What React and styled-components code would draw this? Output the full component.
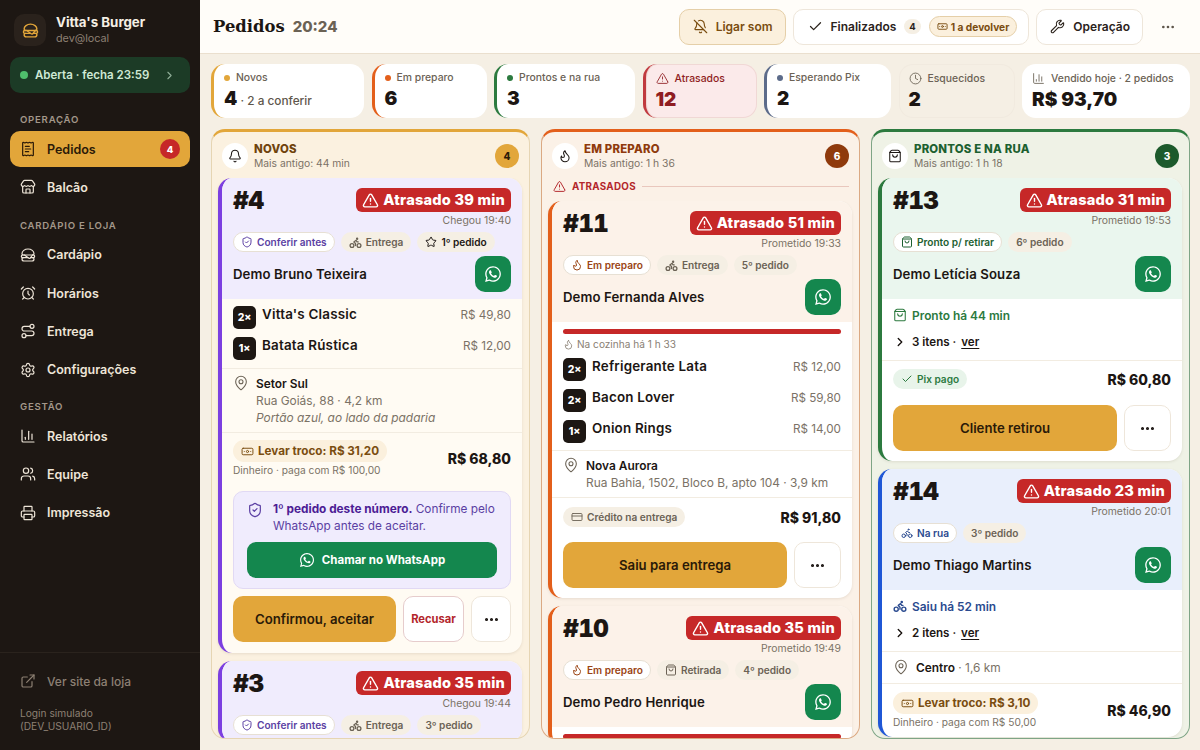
import React from "react";
import styled, { createGlobalStyle } from "styled-components";
import {
  Hamburger,
  ReceiptText,
  Store,
  AlarmClock,
  Route,
  Settings,
  ChartColumn,
  Users,
  Printer,
  ExternalLink,
  ChevronRight,
  BellOff,
  Bell,
  Check,
  Wrench,
  Ellipsis,
  Banknote,
  TriangleAlert,
  Clock,
  Flame,
  ShoppingBag,
  ShieldCheck,
  Bike,
  Star,
  MapPin,
  CreditCard,
} from "lucide-react";
import { FaWhatsapp } from "react-icons/fa";

const GlobalStyle = createGlobalStyle`
  html, body { margin: 0; padding: 0; height: 100%; }
  body { font-family: Inter, "Noto Sans", sans-serif; background: #f5efe4; color: #1c1613; }
  * { box-sizing: border-box; }
`;

const Page = styled.div`
  display: flex;
  height: 750px;
  overflow: hidden;
`;

const Sidebar = styled.aside`
  width: 200px;
  flex-shrink: 0;
  background: #1d1713;
  color: #f5efe4;
  display: flex;
  flex-direction: column;
`;

const Brand = styled.div`
  display: flex;
  align-items: center;
  gap: 10px;
  padding: 14px 14px 0;
`;

const Logo = styled.div`
  width: 32px;
  height: 32px;
  border-radius: 10px;
  background: #2a221c;
  color: #e2a63a;
  display: flex;
  align-items: center;
  justify-content: center;
`;

const BrandName = styled.div`
  font-size: 13.3px;
  font-weight: 700;
  line-height: 17px;
`;

const BrandSub = styled.div`
  font-size: 10.8px;
  color: #8d8073;
  line-height: 15px;
`;

const StatusPill = styled.div`
  margin: 11px 10px 0;
  height: 36px;
  border-radius: 10px;
  background: #1c3b26;
  color: #cfe9d5;
  display: flex;
  align-items: center;
  padding: 0 14px 0 10px;
  font-size: 11.5px;
  font-weight: 600;
  gap: 7px;
  svg { margin-left: auto; color: #8fae97; }
`;

const StatusDot = styled.span`
  width: 8px;
  height: 8px;
  border-radius: 50%;
  background: #4fbf6c;
`;

const NavLabel = styled.div`
  font-size: 9.6px;
  font-weight: 600;
  letter-spacing: 0.75px;
  color: #a3978a;
  padding: 0 20px;
  margin: ${(p) => p.$top || "20px"} 0 5px;
  line-height: 12px;
`;

const NavItem = styled.div`
  margin: 0 10px 2.35px;
  height: 36px;
  border-radius: 10px;
  display: flex;
  align-items: center;
  gap: 11px;
  padding: 0 10px 0 10px;
  font-size: 12.5px;
  font-weight: 600;
  background: ${(p) => (p.$active ? "#e2a63a" : "transparent")};
  color: ${(p) => (p.$active ? "#2b1a08" : "#eee5d8")};
`;

const NavBadge = styled.span`
  margin-left: auto;
  width: 20px;
  height: 20px;
  border-radius: 50%;
  background: #c62828;
  color: #fff;
  font-size: 9.5px;
  font-weight: 800;
  display: flex;
  align-items: center;
  justify-content: center;
`;

const SideFooter = styled.div`
  margin-top: auto;
  border-top: 1px solid #2a231d;
  padding: 18px 20px 17px;
  color: #8d8073;
`;

const SiteLink = styled.div`
  display: flex;
  align-items: center;
  gap: 11px;
  font-size: 12px;
  font-weight: 500;
  height: 20px;
`;

const LoginNote = styled.div`
  margin-top: 16px;
  font-size: 10.2px;
  line-height: 13px;
`;

const Main = styled.main`
  flex: 1;
  min-width: 0;
  display: flex;
  flex-direction: column;
`;

const TopBar = styled.header`
  height: 54px;
  flex-shrink: 0;
  display: flex;
  align-items: center;
  padding: 0 12px 0 13px;
  background: #fffdf9;
  border-bottom: 1px solid #eadfce;
  gap: 7px;
`;

const PageTitle = styled.h1`
  font-family: "DejaVu Serif", serif;
  font-size: 16.4px;
  font-weight: 800;
  margin: 0;
  color: #1c1613;
`;

const ClockText = styled.span`
  font-size: 15px;
  font-weight: 800;
  color: #6b6255;
  margin-left: 1px;
  margin-right: auto;
`;

const TopButton = styled.button`
  height: 36px;
  border-radius: 10px;
  border: 1px solid ${(p) => (p.$on ? "#e5cfa8" : "#eee6da")};
  background: ${(p) => (p.$on ? "#fbf0dd" : "#fff")};
  color: ${(p) => (p.$on ? "#7a4d10" : "#2b231c")};
  padding: ${(p) => p.$pad || "0 12px 0 13px"};
  display: flex;
  align-items: center;
  gap: 8px;
  font-family: inherit;
  font-size: 12px;
  font-weight: 600;
  white-space: nowrap;
`;

const CountChip = styled.span`
  background: #f5efe4;
  border-radius: 9px;
  font-size: 9.5px;
  font-weight: 700;
  padding: 2px 5px;
`;

const ReturnChip = styled.span`
  display: flex;
  align-items: center;
  gap: 3px;
  background: #fbf0dd;
  border: 1px solid #e5cfa8;
  color: #7a4d10;
  border-radius: 11px;
  height: 21px;
  padding: 0 7px;
  font-size: 10.2px;
  font-weight: 700;
`;

const DotsPlain = styled.span`
  margin-left: 10px;
  margin-right: 12px;
  color: #5e564b;
  display: flex;
`;

const StatRow = styled.section`
  display: grid;
  grid-template-columns: 153fr 115fr 141fr 114fr 127fr 116fr 168fr;
  gap: 7.5px;
  padding: 10px 10px 0 11px;
  height: 64px;
  flex-shrink: 0;
`;

const Stat = styled.div`
  border-radius: 14px;
  padding: 8px 8px 0 10px;
  background: ${(p) => p.$bg || "#fff"};
  border-left: ${(p) => (p.$color ? `3px solid ${p.$color}` : "none")};
  box-shadow: ${(p) => (p.$ring ? `inset 0 0 0 1px ${p.$ring}` : "none")};
  overflow: hidden;
`;

const StatLabel = styled.div`
  display: flex;
  align-items: center;
  gap: 6px;
  font-size: 10.4px;
  font-weight: 500;
  line-height: 12px;
  color: ${(p) => p.$color || "#6b6255"};
  white-space: nowrap;
`;

const StatDot = styled.span`
  width: 6px;
  height: 6px;
  border-radius: 50%;
  background: ${(p) => p.$color};
`;

const StatValue = styled.div`
  margin-top: 3px;
  font-size: 19px;
  font-weight: 900;
  line-height: 24px;
  color: ${(p) => p.$color || "#1c1613"};
  white-space: nowrap;
`;

const StatNote = styled.span`
  font-size: 11.8px;
  font-weight: 500;
  color: #5e564b;
`;

const Board = styled.section`
  flex: 1;
  min-height: 0;
  display: grid;
  grid-template-columns: repeat(3, 1fr);
  gap: 11px;
  padding: 11px 10px 11px 11px;
`;

const Column = styled.div`
  min-height: 0;
  overflow: hidden;
  display: flex;
  flex-direction: column;
  border-radius: 14px;
  border: 1px solid ${(p) => p.$line};
  border-top: 3px solid ${(p) => p.$accent};
  background: ${(p) => p.$bg};
`;

const ColumnHead = styled.div`
  display: flex;
  align-items: center;
  gap: 6px;
  padding: 2px 10px 0 10px;
  height: 46px;
  flex-shrink: 0;
`;

const ColumnIcon = styled.span`
  width: 26px;
  height: 26px;
  border-radius: 50%;
  background: #fff;
  display: flex;
  align-items: center;
  justify-content: center;
  flex-shrink: 0;
`;

const ColumnTitle = styled.div`
  font-size: 11.4px;
  font-weight: 800;
  letter-spacing: 0.2px;
  line-height: 14px;
  color: ${(p) => p.$color};
`;

const ColumnSub = styled.div`
  font-size: 10.3px;
  color: #7b7266;
  line-height: 15px;
`;

const ColumnCount = styled.span`
  margin-left: auto;
  width: 24px;
  height: 24px;
  border-radius: 50%;
  background: ${(p) => p.$bg};
  color: ${(p) => p.$color};
  font-size: 10px;
  font-weight: 800;
  display: flex;
  align-items: center;
  justify-content: center;
`;

const LateDivider = styled.div`
  display: flex;
  align-items: center;
  gap: 6px;
  padding: 0 10px 0 11px;
  height: 16px;
  font-size: 9.8px;
  font-weight: 700;
  letter-spacing: 0.3px;
  color: #b3262b;
  flex-shrink: 0;
  margin-bottom: 7px;
  &::after {
    content: "";
    flex: 1;
    height: 1px;
    background: #e9c7bd;
  }
`;

const CardList = styled.div`
  flex: 1;
  min-height: 0;
  overflow: hidden;
  display: flex;
  flex-direction: column;
  gap: 8px;
  padding: 0 7px 0 6px;
`;

const Card = styled.article`
  flex-shrink: 0;
  border-radius: 14px;
  border-left: 4px solid ${(p) => p.$accent};
  background: ${(p) => p.$bg || "#fff"};
  overflow: hidden;
  box-shadow: 0 1px 3px rgba(60, 40, 10, 0.1);
`;

const CardHead = styled.div`
  background: ${(p) => p.$tint};
  padding: 10px 11px 7px;
`;

const CardTop = styled.div`
  display: flex;
  justify-content: space-between;
  align-items: flex-start;
`;

const OrderNumber = styled.div`
  font-size: 24px;
  font-weight: 900;
  line-height: 25px;
  letter-spacing: -0.5px;
  font-variant-numeric: tabular-nums;
  font-feature-settings: "tnum";
`;

const TimeBox = styled.div`
  display: flex;
  flex-direction: column;
  align-items: flex-end;
`;

const LateChip = styled.div`
  display: flex;
  align-items: center;
  gap: 4px;
  height: 24px;
  border-radius: 6px;
  padding: 0 6px 0 6px;
  background: #c62828;
  color: #fff;
  font-size: 14.6px;
  letter-spacing: 0.2px;
  font-weight: 800;
  white-space: nowrap;
`;

const TimeNote = styled.div`
  font-size: 10.4px;
  color: #7b7266;
  line-height: 18px;
`;

const Tags = styled.div`
  display: flex;
  gap: 6px;
  margin-top: 2px;
`;

const Tag = styled.span`
  display: flex;
  align-items: center;
  gap: 4px;
  height: 20px;
  border-radius: 10px;
  padding: 0 7px;
  font-size: 10.1px;
  font-weight: 600;
  white-space: nowrap;
  background: ${(p) => (p.$main ? "#fff" : "#f5efe4")};
  border: 1px solid ${(p) => (p.$main ? "#e7e0d4" : "transparent")};
  color: ${(p) => p.$color || "#6b6255"};
`;

const NameRow = styled.div`
  display: flex;
  align-items: center;
  justify-content: space-between;
  margin-top: 4px;
`;

const CustomerName = styled.div`
  font-size: 13.2px;
  letter-spacing: 0.1px;
  font-weight: 600;
  color: #1c1613;
`;

const WhatsButton = styled.span`
  width: 36px;
  height: 36px;
  border-radius: 10px;
  background: #14874e;
  color: #fff;
  display: flex;
  align-items: center;
  justify-content: center;
`;

const Section = styled.div`
  padding: ${(p) => p.$pad || "7px 11px"};
  border-top: ${(p) => (p.$line ? "1px solid #f2ece1" : "none")};
`;

const LateBar = styled.div`
  height: 5px;
  border-radius: 3px;
  background: #c62828;
`;

const KitchenNote = styled.div`
  display: flex;
  align-items: center;
  gap: 3px;
  margin-top: 3px;
  font-size: 10.1px;
  line-height: 14px;
  color: #8a8175;
`;

const ItemRow = styled.div`
  display: flex;
  gap: 6px;
  height: 24px;
  margin-bottom: 7px;
  &:last-child { margin-bottom: 0; }
`;

const Qty = styled.span`
  width: 23px;
  height: 23px;
  border-radius: 5px;
  background: #1d1713;
  color: #fff;
  font-size: 10.4px;
  font-weight: 800;
  display: flex;
  align-items: center;
  justify-content: center;
  flex-shrink: 0;
`;

const ItemName = styled.span`
  font-size: 13.4px;
  letter-spacing: 0.2px;
  font-weight: 600;
  line-height: 17px;
`;

const ItemPrice = styled.span`
  margin-left: auto;
  font-size: 11.7px;
  line-height: 19px;
  color: #7b7266;
`;

const Place = styled.div`
  display: flex;
  gap: 7px;
  color: #6b6255;
`;

const PlaceLines = styled.div`
  font-size: 11.9px;
  line-height: 17px;
  color: #7b7266;
  min-width: 0;
  white-space: nowrap;
  strong { font-weight: 600; color: #1c1613; }
  em { font-style: italic; }
`;

const StateLine = styled.div`
  display: flex;
  align-items: center;
  gap: 5px;
  height: 14px;
  font-size: 11.9px;
  font-weight: 600;
  color: ${(p) => p.$color};
`;

const ItemsToggle = styled.div`
  display: flex;
  align-items: center;
  gap: 5px;
  margin-top: 13px;
  height: 14px;
  font-size: 11.6px;
  font-weight: 600;
  color: #1c1613;
  u { text-underline-offset: 2px; }
`;

const PayRow = styled.div`
  display: flex;
  align-items: center;
  justify-content: space-between;
`;

const PayChip = styled.span`
  display: inline-flex;
  align-items: center;
  gap: 4px;
  height: ${(p) => (p.$big ? "22px" : "20px")};
  border-radius: 11px;
  padding: 0 8px;
  font-size: ${(p) => (p.$big ? "11.7px" : "10.1px")};
  font-weight: ${(p) => (p.$big ? 700 : 600)};
  white-space: nowrap;
  background: ${(p) => p.$bg};
  color: ${(p) => p.$color};
`;

const PayNote = styled.div`
  font-size: 10.2px;
  line-height: 13px;
  color: #7b7266;
  margin-top: 2px;
`;

const Total = styled.div`
  font-size: 14px;
  font-weight: 800;
  white-space: nowrap;
`;

const Notice = styled.div`
  margin: 0 11px;
  padding: 9px 13px 10px;
  border-radius: 10px;
  background: #f0ecfd;
  border: 1px solid #e1d9f4;
`;

const NoticeText = styled.div`
  display: flex;
  gap: 10px;
  font-size: 11.8px;
  line-height: 17px;
  color: #5b3fa3;
  strong { font-weight: 700; color: #4c1d95; }
  svg { flex-shrink: 0; margin-top: 1px; }
`;

const WideWhats = styled.div`
  margin-top: 7px;
  height: 36px;
  border-radius: 9px;
  background: #14874e;
  color: #fff;
  display: flex;
  align-items: center;
  justify-content: center;
  gap: 7px;
  font-size: 11.5px;
  font-weight: 700;
`;

const Actions = styled.div`
  display: flex;
  gap: 7px;
  padding: ${(p) => p.$pad || "7px 11px 10px"};
`;

const PrimaryAction = styled.button`
  flex: 1;
  height: 46px;
  border: none;
  border-radius: 10px;
  background: #e2a63a;
  color: #2b1a08;
  font-family: inherit;
  font-size: 13.2px;
  font-weight: 600;
`;

const RefuseAction = styled.button`
  width: 61px;
  height: 46px;
  border-radius: 10px;
  border: 1px solid #e6cccc;
  background: #fff;
  color: #b3262b;
  font-family: inherit;
  font-size: 11.2px;
  font-weight: 700;
`;

const MoreAction = styled.button`
  width: ${(p) => (p.$thin ? "40px" : "47px")};
  height: 46px;
  border-radius: 10px;
  border: 1px solid #eee6da;
  background: #fff;
  color: #1c1613;
  display: flex;
  align-items: center;
  justify-content: center;
`;

const NAV = [
  { label: "OPERAÇÃO", top: "21px", items: [
    { icon: ReceiptText, text: "Pedidos", active: true, badge: 4 },
    { icon: Store, text: "Balcão" },
  ] },
  { label: "CARDÁPIO E LOJA", top: "12px", items: [
    { icon: Hamburger, text: "Cardápio" },
    { icon: AlarmClock, text: "Horários" },
    { icon: Route, text: "Entrega" },
    { icon: Settings, text: "Configurações" },
  ] },
  { label: "GESTÃO", top: "11px", items: [
    { icon: ChartColumn, text: "Relatórios" },
    { icon: Users, text: "Equipe" },
    { icon: Printer, text: "Impressão" },
  ] },
];

const STATS = [
  { label: "Novos", dot: "#e2a63a", color: "#e2a63a", value: "4", note: " · 2 a conferir" },
  { label: "Em preparo", dot: "#e35f1b", color: "#e35f1b", value: "6" },
  { label: "Prontos e na rua", dot: "#2c7a3f", color: "#2c7a3f", value: "3" },
  { label: "Atrasados", icon: TriangleAlert, color: "#c03a3f", value: "12", bg: "#fbeaea", ring: "#f0d8d5", text: "#8f1d22" },
  { label: "Esperando Pix", dot: "#5c6b8a", color: "#5c6b8a", value: "2" },
  { label: "Esquecidos", icon: Clock, value: "2", bg: "transparent", ring: "#f1eadf" },
  { label: "Vendido hoje · 2 pedidos", icon: ChartColumn, value: "R$ 93,70" },
];

const WAIT = { text: "Conferir antes", icon: ShieldCheck, color: "#5b3fa3" };
const COOK = { text: "Em preparo", icon: Flame, color: "#9a4413" };

const OrderHead = ({ order }) => (
  <CardHead $tint={order.tint}>
    <CardTop>
      <OrderNumber>{order.number}</OrderNumber>
      <TimeBox>
        <LateChip>
          <TriangleAlert size={17} strokeWidth={2} />
          {order.late}
        </LateChip>
        <TimeNote>{order.time}</TimeNote>
      </TimeBox>
    </CardTop>
    <Tags>
      <Tag $main $color={order.state.color}>
        <order.state.icon size={12} strokeWidth={2} />
        {order.state.text}
      </Tag>
      {order.kind === "Entrega" && (
        <Tag>
          <Bike size={13} strokeWidth={2.4} />
          Entrega
        </Tag>
      )}
      {order.kind === "Retirada" && (
        <Tag>
          <ShoppingBag size={12} strokeWidth={2} />
          Retirada
        </Tag>
      )}
      <Tag $color={order.first ? "#1c1613" : undefined}>
        {order.first && <Star size={12} strokeWidth={2} />}
        {order.nth}
      </Tag>
    </Tags>
    {order.name && (
      <NameRow>
        <CustomerName>{order.name}</CustomerName>
        <WhatsButton>
          <FaWhatsapp size={18} />
        </WhatsButton>
      </NameRow>
    )}
  </CardHead>
);

const Items = ({ items }) =>
  items.map(([qty, name, price]) => (
    <ItemRow key={name}>
      <Qty>{qty}</Qty>
      <ItemName>{name}</ItemName>
      <ItemPrice>{price}</ItemPrice>
    </ItemRow>
  ));

export default function App() {
  return (
    <Page>
      <GlobalStyle />
      <Sidebar>
        <Brand>
          <Logo>
            <Hamburger size={17} strokeWidth={2} />
          </Logo>
          <div>
            <BrandName>Vitta's Burger</BrandName>
            <BrandSub>dev@local</BrandSub>
          </div>
        </Brand>
        <StatusPill>
          <StatusDot />
          Aberta · fecha 23:59
          <ChevronRight size={13} />
        </StatusPill>
        {NAV.map((group) => (
          <React.Fragment key={group.label}>
            <NavLabel $top={group.top}>{group.label}</NavLabel>
            {group.items.map((item) => (
              <NavItem key={item.text} $active={item.active}>
                <item.icon size={16} strokeWidth={1.8} />
                {item.text}
                {item.badge && <NavBadge>{item.badge}</NavBadge>}
              </NavItem>
            ))}
          </React.Fragment>
        ))}
        <SideFooter>
          <SiteLink>
            <ExternalLink size={16} strokeWidth={1.8} />
            Ver site da loja
          </SiteLink>
          <LoginNote>
            Login simulado
            <br />
            (DEV_USUARIO_ID)
          </LoginNote>
        </SideFooter>
      </Sidebar>

      <Main>
        <TopBar>
          <PageTitle>Pedidos</PageTitle>
          <ClockText>20:24</ClockText>
          <TopButton $on>
            <BellOff size={15} strokeWidth={1.8} />
            Ligar som
          </TopButton>
          <TopButton $pad="0 11px 0 14px">
            <Check size={15} strokeWidth={2} />
            Finalizados
            <CountChip>4</CountChip>
            <ReturnChip>
              <Banknote size={11} strokeWidth={2} />1 a devolver
            </ReturnChip>
          </TopButton>
          <TopButton>
            <Wrench size={15} strokeWidth={1.8} />
            Operação
          </TopButton>
          <DotsPlain>
            <Ellipsis size={16} />
          </DotsPlain>
        </TopBar>

        <StatRow>
          {STATS.map((s) => (
            <Stat key={s.label} $color={s.color} $bg={s.bg} $ring={s.ring}>
              <StatLabel $color={s.text}>
                {s.dot && <StatDot $color={s.dot} />}
                {s.icon && <s.icon size={13} strokeWidth={1.6} />}
                {s.label}
              </StatLabel>
              <StatValue $color={s.text}>
                {s.value}
                {s.note && <StatNote>{s.note}</StatNote>}
              </StatValue>
            </Stat>
          ))}
        </StatRow>

        <Board>
          <Column $line="#e6d5b3" $accent="#e2a63a" $bg="#fbf1e0">
            <ColumnHead>
              <ColumnIcon>
                <Bell size={14} strokeWidth={1.8} />
              </ColumnIcon>
              <div>
                <ColumnTitle $color="#6f430c">NOVOS</ColumnTitle>
                <ColumnSub>Mais antigo: 44 min</ColumnSub>
              </div>
              <ColumnCount $bg="#e2a63a" $color="#2b1a08">4</ColumnCount>
            </ColumnHead>
            <CardList>
              <Card $accent="#7c3fe0" $bg="#fffbf3">
                <OrderHead
                  order={{
                    tint: "#f0ecfd",
                    number: "#4",
                    late: "Atrasado 39 min",
                    time: "Chegou 19:40",
                    state: WAIT,
                    kind: "Entrega",
                    first: true,
                    nth: "1º pedido",
                    name: "Demo Bruno Teixeira",
                  }}
                />
                <Section>
                  <Items items={[["2×", "Vitta's Classic", "R$ 49,80"], ["1×", "Batata Rústica", "R$ 12,00"]]} />
                </Section>
                <Section $line $pad="6px 11px 6px">
                  <Place>
                    <MapPin size={16} strokeWidth={1.6} />
                    <PlaceLines>
                      <strong>Setor Sul</strong>
                      <br />
                      Rua Goiás, 88 · 4,2 km
                      <br />
                      <em>Portão azul, ao lado da padaria</em>
                    </PlaceLines>
                  </Place>
                </Section>
                <Section $line $pad="7px 11px 14px">
                  <PayRow>
                    <div>
                      <PayChip $big $bg="#fbf0dd" $color="#7a4d10">
                        <Banknote size={13} strokeWidth={1.8} />
                        Levar troco: R$ 31,20
                      </PayChip>
                      <PayNote>Dinheiro · paga com R$ 100,00</PayNote>
                    </div>
                    <Total>R$ 68,80</Total>
                  </PayRow>
                </Section>
                <Notice>
                  <NoticeText>
                    <ShieldCheck size={16} strokeWidth={1.8} />
                    <div>
                      <strong>1º pedido deste número.</strong> Confirme pelo WhatsApp antes de aceitar.
                    </div>
                  </NoticeText>
                  <WideWhats>
                    <FaWhatsapp size={16} />
                    Chamar no WhatsApp
                  </WideWhats>
                </Notice>
                <Actions $pad="7px 11px 11px">
                  <PrimaryAction>Confirmou, aceitar</PrimaryAction>
                  <RefuseAction>Recusar</RefuseAction>
                  <MoreAction $thin>
                    <Ellipsis size={17} strokeWidth={2.4} />
                  </MoreAction>
                </Actions>
              </Card>
              <Card $accent="#7c3fe0">
                <OrderHead
                  order={{
                    tint: "#f0ecfd",
                    number: "#3",
                    late: "Atrasado 35 min",
                    time: "Chegou 19:44",
                    state: WAIT,
                    kind: "Entrega",
                    nth: "3º pedido",
                  }}
                />
              </Card>
            </CardList>
          </Column>

          <Column $line="#dba983" $accent="#e35f1b" $bg="#fbf1e7">
            <ColumnHead>
              <ColumnIcon>
                <Flame size={14} strokeWidth={1.8} />
              </ColumnIcon>
              <div>
                <ColumnTitle $color="#8f3a0c">EM PREPARO</ColumnTitle>
                <ColumnSub>Mais antigo: 1 h 36</ColumnSub>
              </div>
              <ColumnCount $bg="#8f3a0c" $color="#fff">6</ColumnCount>
            </ColumnHead>
            <LateDivider>
              <TriangleAlert size={13} strokeWidth={1.8} />
              ATRASADOS
            </LateDivider>
            <CardList>
              <Card $accent="#e35f1b">
                <OrderHead
                  order={{
                    tint: "#fcf2e9",
                    number: "#11",
                    late: "Atrasado 51 min",
                    time: "Prometido 19:33",
                    state: COOK,
                    kind: "Entrega",
                    nth: "5º pedido",
                    name: "Demo Fernanda Alves",
                  }}
                />
                <Section $pad="7px 11px 0">
                  <LateBar />
                  <KitchenNote>
                    <Flame size={11} strokeWidth={1.8} />
                    Na cozinha há 1 h 33
                  </KitchenNote>
                </Section>
                <Section $pad="7px 11px 6px">
                  <Items items={[["2×", "Refrigerante Lata", "R$ 12,00"], ["2×", "Bacon Lover", "R$ 59,80"], ["1×", "Onion Rings", "R$ 14,00"]]} />
                </Section>
                <Section $line $pad="6px 11px 6px">
                  <Place>
                    <MapPin size={16} strokeWidth={1.6} />
                    <PlaceLines>
                      <strong>Nova Aurora</strong>
                      <br />
                      Rua Bahia, 1502, Bloco B, apto 104 · 3,9 km
                    </PlaceLines>
                  </Place>
                </Section>
                <Section $line $pad="9px 11px 8px">
                  <PayRow>
                    <PayChip $bg="#f5efe4" $color="#6b6255">
                      <CreditCard size={12} strokeWidth={1.8} />
                      Crédito na entrega
                    </PayChip>
                    <Total>R$ 91,80</Total>
                  </PayRow>
                </Section>
                <Actions>
                  <PrimaryAction>Saiu para entrega</PrimaryAction>
                  <MoreAction>
                    <Ellipsis size={17} strokeWidth={2.4} />
                  </MoreAction>
                </Actions>
              </Card>
              <Card $accent="#e35f1b">
                <OrderHead
                  order={{
                    tint: "#fcf2e9",
                    number: "#10",
                    late: "Atrasado 35 min",
                    time: "Prometido 19:49",
                    state: COOK,
                    kind: "Retirada",
                    nth: "4º pedido",
                    name: "Demo Pedro Henrique",
                  }}
                />
                <Section>
                  <LateBar />
                </Section>
              </Card>
            </CardList>
          </Column>

          <Column $line="#7ea586" $accent="#2c7a3f" $bg="#eff2e6">
            <ColumnHead>
              <ColumnIcon>
                <ShoppingBag size={14} strokeWidth={1.8} />
              </ColumnIcon>
              <div>
                <ColumnTitle $color="#1c6030">PRONTOS E NA RUA</ColumnTitle>
                <ColumnSub>Mais antigo: 1 h 18</ColumnSub>
              </div>
              <ColumnCount $bg="#1c5a2c" $color="#fff">3</ColumnCount>
            </ColumnHead>
            <CardList>
              <Card $accent="#2c7a3f">
                <OrderHead
                  order={{
                    tint: "#eaf6ee",
                    number: "#13",
                    late: "Atrasado 31 min",
                    time: "Prometido 19:53",
                    state: { text: "Pronto p/ retirar", icon: ShoppingBag, color: "#1c6030" },
                    nth: "6º pedido",
                    name: "Demo Letícia Souza",
                  }}
                />
                <Section $pad="9px 11px 11px">
                  <StateLine $color="#2c7a3f">
                    <ShoppingBag size={14} strokeWidth={1.8} />
                    Pronto há 44 min
                  </StateLine>
                  <ItemsToggle>
                    <ChevronRight size={14} strokeWidth={2.4} />
                    3 itens · <u>ver</u>
                  </ItemsToggle>
                </Section>
                <Section $line $pad="8px 11px 9px">
                  <PayRow>
                    <PayChip $bg="#e8f4ea" $color="#2c7a3f">
                      <Check size={12} strokeWidth={2} />
                      Pix pago
                    </PayChip>
                    <Total>R$ 60,80</Total>
                  </PayRow>
                </Section>
                <Actions>
                  <PrimaryAction>Cliente retirou</PrimaryAction>
                  <MoreAction>
                    <Ellipsis size={17} strokeWidth={2.4} />
                  </MoreAction>
                </Actions>
              </Card>
              <Card $accent="#1f57d6">
                <OrderHead
                  order={{
                    tint: "#e9effc",
                    number: "#14",
                    late: "Atrasado 23 min",
                    time: "Prometido 20:01",
                    state: { text: "Na rua", icon: Bike, color: "#2a4a8f" },
                    nth: "3º pedido",
                    name: "Demo Thiago Martins",
                  }}
                />
                <Section $pad="9px 11px 11px">
                  <StateLine $color="#2a4a8f">
                    <Bike size={14} strokeWidth={2.4} />
                    Saiu há 52 min
                  </StateLine>
                  <ItemsToggle>
                    <ChevronRight size={14} strokeWidth={2.4} />
                    2 itens · <u>ver</u>
                  </ItemsToggle>
                </Section>
                <Section $line $pad="7px 11px 7px">
                  <Place>
                    <MapPin size={16} strokeWidth={1.6} />
                    <PlaceLines>
                      <strong>Centro</strong> · 1,6 km
                    </PlaceLines>
                  </Place>
                </Section>
                <Section $line $pad="8px 11px 8px">
                  <PayRow>
                    <div>
                      <PayChip $big $bg="#fbf0dd" $color="#7a4d10">
                        <Banknote size={13} strokeWidth={1.8} />
                        Levar troco: R$ 3,10
                      </PayChip>
                      <PayNote>Dinheiro · paga com R$ 50,00</PayNote>
                    </div>
                    <Total>R$ 46,90</Total>
                  </PayRow>
                </Section>
              </Card>
            </CardList>
          </Column>
        </Board>
      </Main>
    </Page>
  );
}
